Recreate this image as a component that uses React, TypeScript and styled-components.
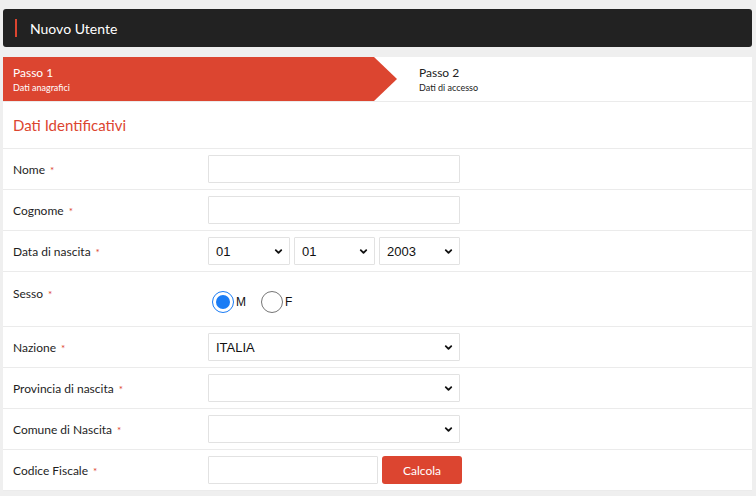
import React, { useState } from 'react';
import styled, { createGlobalStyle } from 'styled-components';
import { ChevronDown } from 'lucide-react';

const GlobalStyle = createGlobalStyle`
    html, body {
        margin: 0;
        padding: 0;
        background-color: #EFEFEF;
        font-family: Lato, "Open Sans", sans-serif;
    }
`

const red = '#DC4530';

const Page = styled.div`
    padding: 9px 4px 0 3px;
`

const Header = styled.div`
    height: 38px;
    background-color: #222222;
    border-radius: 3px;
    display: flex;
    align-items: center;
    padding-left: 12px;
    margin-bottom: 10px;

    .header__accent{
        width: 2px;
        height: 18px;
        background-color: ${red};
        margin-right: 13px;
    }

    .header__title{
        color: #FFFFFF;
        font-size: 14px;
    }
`

const Panel = styled.div`
    background-color: #FFFFFF;
`

const Steps = styled.div`
    display: flex;
    height: 44px;
    border-bottom: 1px solid #EBEBEB;
`

const Step = styled.div<{ $active?: boolean }>`
    display: flex;
    flex-direction: column;
    justify-content: center;
    width: ${p => p.$active ? '394px' : 'auto'};
    padding-left: ${p => p.$active ? '10px' : '22px'};
    box-sizing: border-box;
    color: ${p => p.$active ? '#FFFFFF' : '#222222'};
    background-color: ${p => p.$active ? red : 'transparent'};
    clip-path: ${p => p.$active ? 'polygon(0 0, 371px 0, 394px 50%, 371px 100%, 0 100%)' : 'none'};

    .step__name{
        font-size: 12px;
        line-height: 15px;
    }

    .step__sub{
        font-size: 9px;
        line-height: 12px;
        margin-top: 2px;
    }
`

const SectionTitle = styled.div`
    color: ${red};
    font-size: 15px;
    padding: 0 10px;
    height: 46px;
    display: flex;
    align-items: center;
    border-bottom: 1px solid #EBEBEB;
`

const Row = styled.div<{ $tall?: boolean }>`
    display: flex;
    align-items: ${p => p.$tall ? 'flex-start' : 'center'};
    height: ${p => p.$tall ? '54px' : '40px'};
    border-bottom: 1px solid #EBEBEB;
    padding-left: 10px;
`

const Label = styled.label<{ $tall?: boolean }>`
    width: 195px;
    font-size: 12px;
    color: #1E1E1E;
    padding-top: ${p => p.$tall ? '14px' : '0'};

    span{
        color: ${red};
        font-size: 10px;
        margin-left: 5px;
    }
`

const Controls = styled.div`
    display: flex;
    gap: 4px;
    align-items: center;
`

const TextInput = styled.input<{ $width?: number }>`
    width: ${p => p.$width ?? 252}px;
    height: 28px;
    box-sizing: border-box;
    border: 1px solid #E2E2E2;
    border-radius: 1px;
    outline: none;
    font-family: "Liberation Sans", Arial, sans-serif;
    font-size: 13px;
    padding: 0 8px;
`

const SelectWrap = styled.div<{ $width?: number }>`
    position: relative;
    width: ${p => p.$width ?? 252}px;
    height: 28px;

    svg{
        position: absolute;
        right: 6px;
        top: 9px;
        pointer-events: none;
        color: #111111;
    }
`

const Select = styled.select`
    appearance: none;
    width: 100%;
    height: 100%;
    box-sizing: border-box;
    border: 1px solid #E2E2E2;
    border-radius: 1px;
    background-color: #FFFFFF;
    font-family: "Liberation Sans", Arial, sans-serif;
    font-size: 13px;
    color: #111111;
    padding: 0 7px;
    outline: none;
`

const RadioGroup = styled.div`
    display: flex;
    gap: 15px;
    padding-top: 14px;
    padding-left: 4px;
`

const RadioOption = styled.label`
    display: flex;
    align-items: center;
    font-family: "Liberation Sans", Arial, sans-serif;
    font-size: 12px;
    color: #111111;
    cursor: pointer;
    gap: 2px;
    height: 32px;
`

const RadioCircle = styled.span<{ $checked?: boolean }>`
    width: 22px;
    height: 22px;
    border-radius: 50%;
    box-sizing: border-box;
    border: ${p => p.$checked ? '1.5px solid #1A7CF5' : '1.2px solid #767676'};
    background-color: #FFFFFF;
    display: flex;
    align-items: center;
    justify-content: center;

    &::after{
        content: '';
        width: 14px;
        height: 14px;
        border-radius: 50%;
        background-color: ${p => p.$checked ? '#1A7CF5' : 'transparent'};
    }
`

const CalcButton = styled.button`
    width: 80px;
    height: 28px;
    border: none;
    border-radius: 3px;
    background-color: ${red};
    color: #FFFFFF;
    font-family: Lato, sans-serif;
    font-size: 12px;
    cursor: pointer;
`

const days = Array.from({ length: 31 }, (_, i) => String(i + 1).padStart(2, '0'));
const months = Array.from({ length: 12 }, (_, i) => String(i + 1).padStart(2, '0'));
const years = Array.from({ length: 80 }, (_, i) => String(2003 - i));

interface DropdownProps {
    width?: number,
    options: string[],
    value?: string,
}

const Dropdown: React.FunctionComponent<DropdownProps> = ({ width, options, value }) => (
    <SelectWrap $width={width}>
        <Select defaultValue={value}>
            {options.map(o => <option key={o} value={o}>{o}</option>)}
        </Select>
        <ChevronDown size={11} strokeWidth={4} />
    </SelectWrap>
)

const Required = () => <span>*</span>;

const App: React.FunctionComponent = () => {
    const [sex, setSex] = useState('M');

    return (
        <Page>
            <GlobalStyle />
            <Header>
                <div className='header__accent' />
                <span className='header__title'>Nuovo Utente</span>
            </Header>
            <Panel>
                <Steps>
                    <Step $active>
                        <span className='step__name'>Passo 1</span>
                        <span className='step__sub'>Dati anagrafici</span>
                    </Step>
                    <Step>
                        <span className='step__name'>Passo 2</span>
                        <span className='step__sub'>Dati di accesso</span>
                    </Step>
                </Steps>
                <SectionTitle>Dati Identificativi</SectionTitle>
                <Row>
                    <Label>Nome<Required /></Label>
                    <TextInput />
                </Row>
                <Row>
                    <Label>Cognome<Required /></Label>
                    <TextInput />
                </Row>
                <Row>
                    <Label>Data di nascita<Required /></Label>
                    <Controls>
                        <Dropdown width={82} options={days} value='01' />
                        <Dropdown width={81} options={months} value='01' />
                        <Dropdown width={81} options={years} value='2003' />
                    </Controls>
                </Row>
                <Row $tall>
                    <Label $tall>Sesso<Required /></Label>
                    <RadioGroup>
                        {['M', 'F'].map(s => (
                            <RadioOption key={s} onClick={() => setSex(s)}>
                                <RadioCircle $checked={sex === s} />
                                {s}
                            </RadioOption>
                        ))}
                    </RadioGroup>
                </Row>
                <Row>
                    <Label>Nazione<Required /></Label>
                    <Dropdown options={['ITALIA']} value='ITALIA' />
                </Row>
                <Row>
                    <Label>Provincia di nascita<Required /></Label>
                    <Dropdown options={['']} />
                </Row>
                <Row>
                    <Label>Comune di Nascita<Required /></Label>
                    <Dropdown options={['']} />
                </Row>
                <Row>
                    <Label>Codice Fiscale<Required /></Label>
                    <Controls>
                        <TextInput $width={170} />
                        <CalcButton>Calcola</CalcButton>
                    </Controls>
                </Row>
            </Panel>
        </Page>
    )
}

export default App;
